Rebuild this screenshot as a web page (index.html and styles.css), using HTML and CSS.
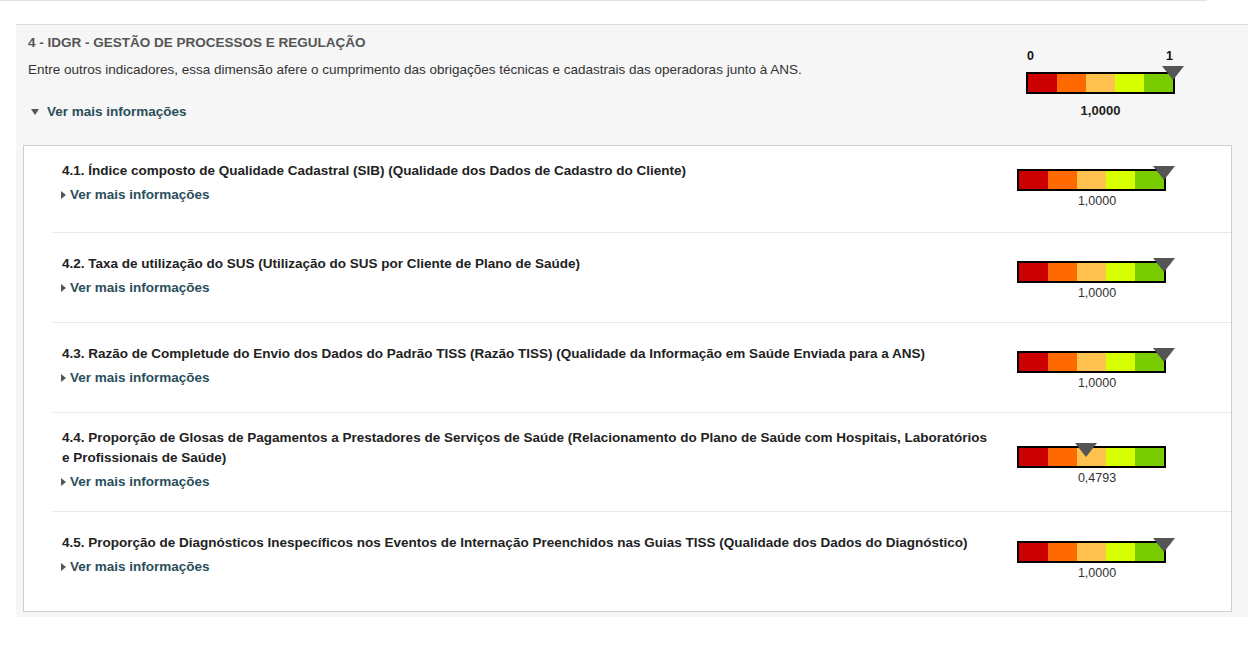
FILE: index.html
```html
<!DOCTYPE html>
<html lang="pt-BR">
<head>
<meta charset="utf-8">
<title>IDGR - Gestão de Processos e Regulação</title>
<link rel="stylesheet" href="styles.css">
</head>
<body>
<div class="topline"></div>

<div class="dimension">
 <!-- Cabeçalho da dimensão -->
 <div class="dim-head">
  <div class="dim-text">
   <h2>4 - IDGR - GESTÃO DE PROCESSOS E REGULAÇÃO</h2>
   <p>Entre outros indicadores, essa dimensão afere o cumprimento das obrigações técnicas e cadastrais das operadoras junto à ANS.</p>
   <a class="more open" href="#">Ver mais informações</a>
  </div>
  <div class="gauge big">
   <div class="scale"><span>0</span><span>1</span></div>
   <div class="bar"><span class="c1"></span><span class="c2"></span><span class="c3"></span><span class="c4"></span><span class="c5"></span><i class="pointer" style="left:calc(100% - 11.5px)"></i></div>
   <div class="value">1,0000</div>
  </div>
 </div>

 <!-- Indicadores -->
 <div class="indicators">
  <div class="item first">
   <div class="item-text">
    <h3>4.1. Índice composto de Qualidade Cadastral (SIB) (Qualidade dos Dados de Cadastro do Cliente)</h3>
    <a class="more" href="#">Ver mais informações</a>
   </div>
   <div class="gauge">
    <div class="bar"><span class="c1"></span><span class="c2"></span><span class="c3"></span><span class="c4"></span><span class="c5"></span><i class="pointer" style="left:calc(100% - 11px)"></i></div>
    <div class="value">1,0000</div>
   </div>
  </div>

  <div class="item">
   <div class="item-text">
    <h3>4.2. Taxa de utilização do SUS (Utilização do SUS por Cliente de Plano de Saúde)</h3>
    <a class="more" href="#">Ver mais informações</a>
   </div>
   <div class="gauge">
    <div class="bar"><span class="c1"></span><span class="c2"></span><span class="c3"></span><span class="c4"></span><span class="c5"></span><i class="pointer" style="left:calc(100% - 11px)"></i></div>
    <div class="value">1,0000</div>
   </div>
  </div>

  <div class="item">
   <div class="item-text">
    <h3>4.3. Razão de Completude do Envio dos Dados do Padrão TISS (Razão TISS) (Qualidade da Informação em Saúde Enviada para a ANS)</h3>
    <a class="more" href="#">Ver mais informações</a>
   </div>
   <div class="gauge">
    <div class="bar"><span class="c1"></span><span class="c2"></span><span class="c3"></span><span class="c4"></span><span class="c5"></span><i class="pointer" style="left:calc(100% - 11px)"></i></div>
    <div class="value">1,0000</div>
   </div>
  </div>

  <div class="item">
   <div class="item-text">
    <h3>4.4. Proporção de Glosas de Pagamentos a Prestadores de Serviços de Saúde (Relacionamento do Plano de Saúde com Hospitais, Laboratórios e Profissionais de Saúde)</h3>
    <a class="more" href="#">Ver mais informações</a>
   </div>
   <div class="gauge">
    <div class="bar"><span class="c1"></span><span class="c2"></span><span class="c3"></span><span class="c4"></span><span class="c5"></span><i class="pointer" style="left:calc(47.93% - 13px)"></i></div>
    <div class="value">0,4793</div>
   </div>
  </div>

  <div class="item">
   <div class="item-text">
    <h3>4.5. Proporção de Diagnósticos Inespecíficos nos Eventos de Internação Preenchidos nas Guias TISS (Qualidade dos Dados do Diagnóstico)</h3>
    <a class="more" href="#">Ver mais informações</a>
   </div>
   <div class="gauge">
    <div class="bar"><span class="c1"></span><span class="c2"></span><span class="c3"></span><span class="c4"></span><span class="c5"></span><i class="pointer" style="left:calc(100% - 11px)"></i></div>
    <div class="value">1,0000</div>
   </div>
  </div>
 </div>
</div>
</body>
</html>
```

FILE: styles.css
```css
/* ---------- Base ---------- */
*{box-sizing:border-box}
body{margin:0;background:#fff;font-family:"Liberation Sans",Arial,sans-serif;color:#333}
a{text-decoration:none}
.topline{width:1207px;height:1px;background:#e2e2e2}

/* ---------- Dimension panel ---------- */
.dimension{margin:23px 0 0 16px;background:#f6f6f6;border-top:1px solid #dcdcdc;padding:0 16px 5px 7px}
.dim-head{display:flex;align-items:flex-start;padding:10px 0 25px 5px}
.dim-text{flex:1}
.dim-head h2{margin:0;font-size:13.5px;line-height:16px;font-weight:700;color:#555}
.dim-head p{margin:11px 0 0;font-size:13.5px;line-height:16px;color:#333}
.dim-head .more{margin-top:26px}

.more{display:flex;align-items:center;font-size:13.5px;line-height:20px;font-weight:700;color:#2b4e5b}
.more::before{content:"";width:0;height:0;border-left:5px solid #555;border-top:4px solid transparent;border-bottom:4px solid transparent;margin:0 4px 0 -1px}
.more.open{line-height:16px}
.more.open::before{border-top:6px solid #555;border-left:4.5px solid transparent;border-right:4.5px solid transparent;border-bottom:0;margin:0 8px 0 3px}

/* ---------- Gauge ---------- */
.gauge{width:149px;flex:none}
.gauge .bar{position:relative;display:flex;height:22px;border:2px solid #000}
.gauge .bar span{flex:1}
.c1{background:#cc0000}
.c2{background:#ff6a00}
.c3{background:#ffc24f}
.c4{background:#d6ff00}
.c5{background:#78cc00}
.pointer{position:absolute;top:-5px;width:0;height:0;border-left:11px solid transparent;border-right:11px solid transparent;border-top:14px solid #555}
.gauge .value{margin-top:3px;padding-left:11px;font-size:12.5px;line-height:14px;text-align:center;color:#333}

.gauge.big{margin:15px 57px 0 0}
.gauge.big .scale{display:flex;justify-content:space-between;padding:0 2px 0 1px;font-size:12.5px;line-height:12px;font-weight:700;color:#111}
.gauge.big .bar{margin-top:10px}
.gauge.big .pointer{top:-8px;border-left-width:11.5px;border-right-width:11.5px}
.gauge.big .value{margin-top:10px;padding-left:0;font-size:13px;font-weight:700;color:#222}

/* ---------- Indicators box ---------- */
.indicators{background:#fff;border:1px solid #cfcfcf;padding:0 0 9px 29px}
.item{display:flex;align-items:center;min-height:90px;padding:15px 0 15px 9px;border-bottom:1px solid #e8e8e8}
.item.first{min-height:87px;padding-top:11px;padding-bottom:19px}
.item:last-child{border-bottom:0}
.item-text{flex:1;padding-bottom:4px}
.item h3{margin:0 0 4px;font-size:13.5px;line-height:20px;font-weight:700;color:#222}
.item .gauge{margin:6px 65px 0 22px}
```
